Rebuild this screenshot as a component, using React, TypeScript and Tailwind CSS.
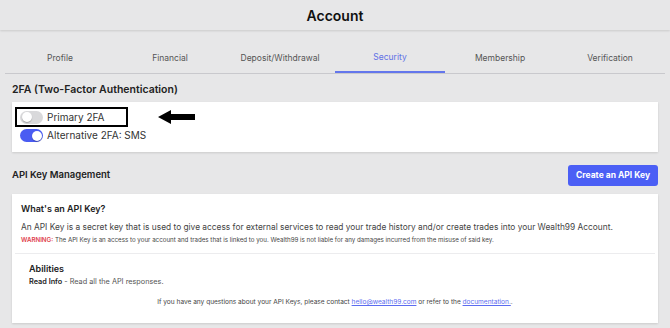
import React from "react";

const tabs = ["Profile", "Financial", "Deposit/Withdrawal", "Security", "Membership", "Verification"];

function Toggle({ on }: { on: boolean }) {
  return (
    <span
      className={`relative inline-flex h-[13px] w-[23px] shrink-0 items-center rounded-full ${
        on ? "bg-[#4a5cf2]" : "bg-[#d9d9db]"
      }`}
    >
      <span
        className={`absolute top-[1.5px] h-[10px] w-[10px] rounded-full bg-white shadow-[0_1px_1px_rgba(0,0,0,0.25)] ${
          on ? "right-[1.5px]" : "left-[1.5px]"
        }`}
      />
    </span>
  );
}

function LeftArrow() {
  return (
    <svg width="37" height="14" viewBox="0 0 37 14" className="shrink-0">
      <polygon points="0,7 13,0 13,4 37,4 37,10 13,10 13,14" fill="#000" />
    </svg>
  );
}

export default function App() {
  return (
    <div className="h-[328px] w-full overflow-hidden bg-[#e7e7e8] font-['Inter',sans-serif] text-[#222]">
      <div className="flex h-[30px] items-center justify-center shadow-[0_1px_2px_rgba(0,0,0,0.12)]">
        <h1 className="text-[14px] font-semibold text-[#111]">Account</h1>
      </div>

      <div className="mx-[5px] mt-[13px] grid grid-cols-6 border-b border-[#c9c9cd]">
        {tabs.map((t) => (
          <div
            key={t}
            className={`flex h-[30px] items-center justify-center text-[8.5px] ${
              t === "Security"
                ? "-mb-px border-b-2 border-[#6477ec] text-[#5f70e6]"
                : "text-[#555]"
            }`}
          >
            {t}
          </div>
        ))}
      </div>

      <div className="px-[12px]">
        <h2 className="mt-[9px] text-[10.5px] font-semibold leading-[14px] text-[#222]">
          2FA (Two-Factor Authentication)
        </h2>

        <div className="mt-[5px] h-[50px] bg-white pl-[3px] pt-[5px] shadow-[0_1px_2px_rgba(0,0,0,0.12)]">
          <div className="flex items-center">
            <div className="flex h-[20px] w-[113px] items-center gap-[4px] border-2 border-black pl-[3px]">
              <Toggle on={false} />
              <span className="text-[10px] text-[#333]">Primary 2FA</span>
            </div>
            <span className="ml-[30px] flex">
              <LeftArrow />
            </span>
          </div>
          <div className="mt-px flex items-center gap-[4px] pl-[5px]">
            <Toggle on={true} />
            <span className="text-[10px] text-[#333]">Alternative 2FA: SMS</span>
          </div>
        </div>

        <div className="mt-[13px] flex items-center justify-between">
          <h2 className="text-[9.5px] font-semibold text-[#222]">API Key Management</h2>
          <button
            type="button"
            className="h-[21px] w-[90px] rounded-[3px] bg-[#4b5ff5] text-[8.5px] font-bold text-white"
          >
            Create an API Key
          </button>
        </div>

        <div className="mt-[8px] h-[129px] bg-white px-[9px] pt-[9px] shadow-[0_1px_2px_rgba(0,0,0,0.12)]">
          <h3 className="text-[9px] font-semibold leading-[12px] text-[#222]">What's an API Key?</h3>
          <p className="mt-[6px] text-[8.35px] leading-[12px] text-[#444]">
            An API Key is a secret key that is used to give access for external services to read your trade history and/or
            create trades into your Wealth99 Account.
          </p>
          <p className="mt-[2px] text-[6.2px] leading-[10px] text-[#444]">
            <span className="font-semibold text-[#e0404a]">WARNING:</span> The API Key is an access to your account and
            trades that is linked to you. Wealth99 is not liable for any damages incurred from the misuse of said key.
          </p>
          <div className="-mx-[6px] mt-[8px] border-t border-[#ececee] px-[14px] pt-[9px]">
            <h4 className="text-[9px] font-semibold leading-[12px] text-[#222]">Abilities</h4>
            <p className="mt-[1px] text-[7.3px] leading-[11px] text-[#555]">
              <span className="font-semibold text-[#222]">Read Info</span> - Read all the API responses.
            </p>
            <p className="mt-[10px] text-center text-[6.55px] leading-[10px] text-[#444]">
              If you have any questions about your API Keys, please contact{" "}
              <span className="text-[#5b6cf0] underline">hello@wealth99.com</span> or refer to the{" "}
              <span className="text-[#5b6cf0] underline">documentation.</span>.
            </p>
          </div>
        </div>
      </div>
    </div>
  );
}
